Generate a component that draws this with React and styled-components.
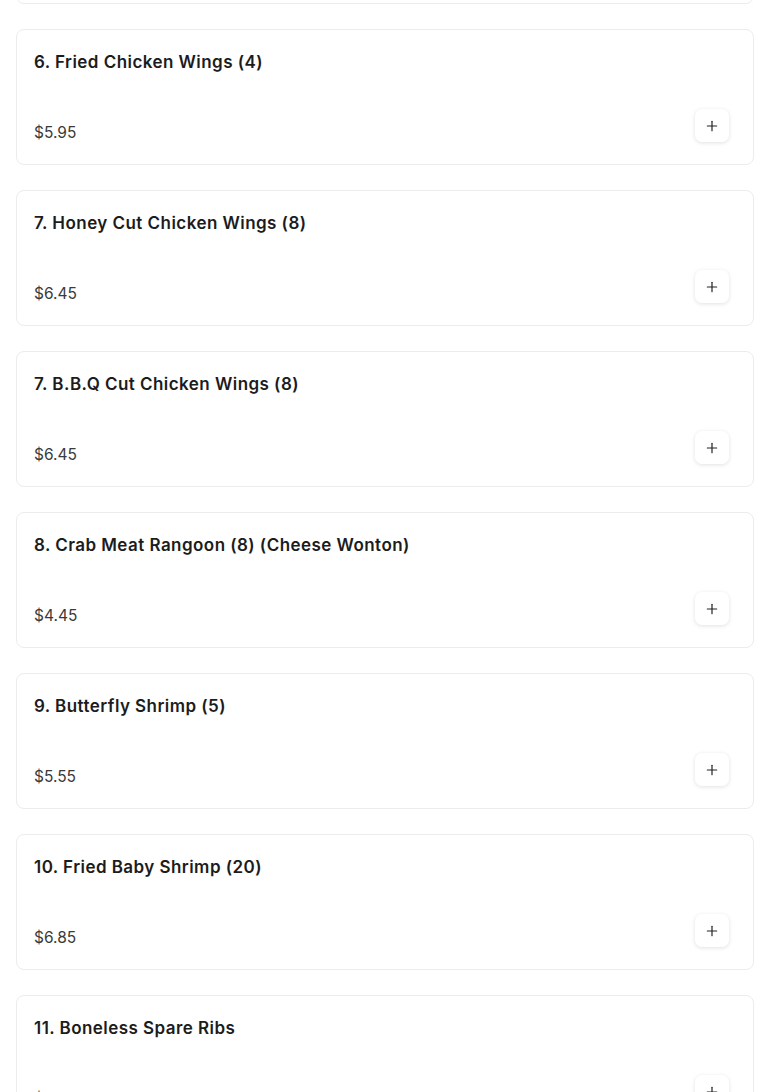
import React from "react"
import styled, { createGlobalStyle } from "styled-components"
import { Plus } from "lucide-react"

const items = [
  { name: "5. Chicken Fingers (5)", price: "$5.25" },
  { name: "6. Fried Chicken Wings (4)", price: "$5.95" },
  { name: "7. Honey Cut Chicken Wings (8)", price: "$6.45" },
  { name: "7. B.B.Q Cut Chicken Wings (8)", price: "$6.45" },
  { name: "8. Crab Meat Rangoon (8) (Cheese Wonton)", price: "$4.45" },
  { name: "9. Butterfly Shrimp (5)", price: "$5.55" },
  { name: "10. Fried Baby Shrimp (20)", price: "$6.85" },
  { name: "11. Boneless Spare Ribs", price: "$8.95" },
]

const App = () => {
  return (
    <>
      <GlobalStyle />
      <Viewport>
        <List>
          {items.map((item, i) => (
            <Card key={i}>
              <Title>{item.name}</Title>
              <Bottom>
                <Price>{item.price}</Price>
                <AddButton aria-label="Add">
                  <Plus size={16} strokeWidth={1.8} />
                </AddButton>
              </Bottom>
            </Card>
          ))}
        </List>
      </Viewport>
    </>
  )
}

const GlobalStyle = createGlobalStyle`
  body {
    margin: 0;
    background: #fff;
    font-family: Inter, "Open Sans", sans-serif;
    color: #1a1a1a;
  }
`

const Viewport = styled.div`
  height: 1092px;
  overflow: hidden;
`

const List = styled.div`
  display: flex;
  flex-direction: column;
  gap: 25px;
  padding: 0 16px;
  margin-top: -132px;
`

const Card = styled.div`
  border: 1px solid #ececec;
  border-radius: 8px;
  background: #fff;
  padding: 20px 24px 22px 17px;
  display: flex;
  flex-direction: column;
  gap: 35px;
`

const Title = styled.h3`
  margin: 0;
  font-size: 17px;
  line-height: 24px;
  font-weight: 600;
  letter-spacing: 0.45px;
  color: #1c1c1c;
`

const Bottom = styled.div`
  display: flex;
  align-items: flex-end;
  justify-content: space-between;
`

const Price = styled.span`
  font-size: 15.5px;
  line-height: 18px;
  color: #3a3a3a;
`

const AddButton = styled.button`
  width: 34px;
  height: 33px;
  border: none;
  border-radius: 7px;
  background: #fff;
  box-shadow: 0 1px 4px rgba(0, 0, 0, 0.12);
  display: flex;
  align-items: center;
  justify-content: center;
  color: #222;
  padding: 0;
  cursor: pointer;
`

export default App
